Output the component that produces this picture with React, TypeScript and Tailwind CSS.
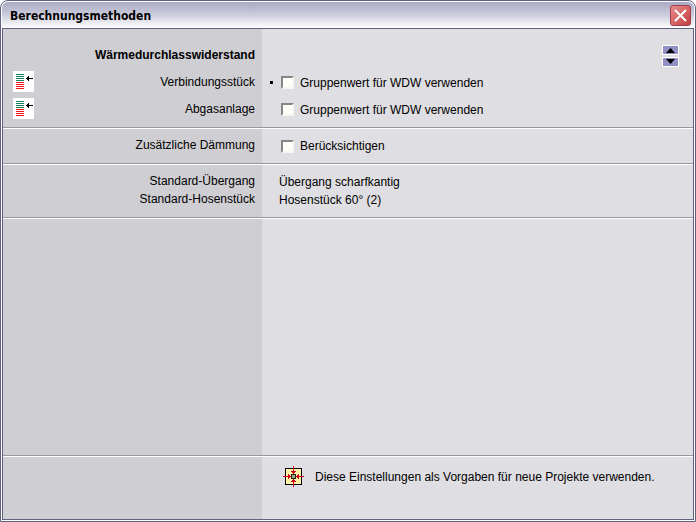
import { useState } from 'react';

interface CheckProps {
  id: string;
  label: string;
}

const Check: React.FC<CheckProps> = ({ id, label }) => {
  const [checked, setChecked] = useState(false);

  return (
    <div className="flex items-center gap-[6px]">
      <input
        id={id}
        type="checkbox"
        checked={checked}
        onChange={(e) => setChecked(e.target.checked)}
        className="h-[13px] w-[13px] appearance-none border-2 border-t-[#86868a] border-l-[#86868a] border-r-[#f6f6f0] border-b-[#f6f6f0] bg-[#fffff8] checked:bg-[#53536f]"
      />
      <label htmlFor={id}>{label}</label>
    </div>
  );
};

const LayersIcon: React.FC = () => (
  <svg width="21" height="21" viewBox="0 0 21 21" shapeRendering="crispEdges" className="block">
    <rect width="21" height="21" fill="#fff" />
    <path d="M3 3h8v1H3zM3 5h8v1H3zM3 7h8v1H3zM3 9h8v1H3z" fill="#16825f" />
    <path d="M3 11h8v1H3zM3 13h8v1H3zM3 15h8v1H3zM3 17h8v1H3z" fill="#f01418" />
    <path d="M13 7h7v1h-7zM14 6h2v3h-2zM15 5h1v5h-1z" fill="#000" />
  </svg>
);

const DefaultsIcon: React.FC = () => (
  <svg width="21" height="21" viewBox="0 0 21 21" shapeRendering="crispEdges" className="block">
    <path d="M2 2h17v17H2z" fill="#000" />
    <path d="M3 3h15v15H3z" fill="#fff3a6" />
    <path
      d="M10 0h1v8h-1zM10 13h1v8h-1zM0 10h8v1H0zM13 10h8v1h-8zM8 5h5v1H8zM9 6h3v1H9zM8 15h5v1H8zM9 14h3v1H9zM5 8h1v5H5zM6 9h1v3H6zM15 8h1v5h-1zM14 9h1v3h-1z"
      fill="#d40020"
    />
    <path d="M8 8h5v5H8z" fill="#222" />
    <path d="M9 9h3v3H9z" fill="#9aae7c" />
  </svg>
);

interface RowProps {
  label?: React.ReactNode;
  children?: React.ReactNode;
  className?: string;
}

// label column on the left, values on the right
const Row: React.FC<RowProps> = ({ label, children, className = '' }) => (
  <div className={`grid grid-cols-[259px_1fr] border-b border-b-white ${className}`}>
    <div className="border-b border-b-[#98989e] bg-[#cfced3] pr-[7px] pl-[10px] text-right">{label}</div>
    <div className="border-b border-b-[#98989e] bg-[#dfdee3] pl-2">{children}</div>
  </div>
);

const App: React.FC = () => {
  return (
    <div className="flex min-h-screen flex-col rounded-t-lg border border-[#606080] bg-white p-px font-['Liberation_Sans',Arial,sans-serif] text-[12px] leading-[18px] text-black">
      <header className="flex h-[26px] items-center justify-between rounded-t-md bg-linear-to-b from-[#a9a9c4] via-[#cdcddd] to-white pr-[3px] pl-2">
        <h1 className="pt-[2px] font-['DejaVu_Sans_Condensed','DejaVu_Sans',sans-serif] text-[12px] font-bold">
          Berechnungsmethoden
        </h1>
        <button
          type="button"
          aria-label="Schließen"
          className="flex h-[21px] w-[21px] items-center justify-center rounded-[3px] border border-[#a03c4c] bg-linear-to-br from-[#e88c8c] to-[#c43c40]"
        >
          <svg width="13" height="13" viewBox="0 0 13 13">
            <path d="M1 1l11 11M12 1L1 12" stroke="#fff" strokeWidth="2" />
          </svg>
        </button>
      </header>

      <main className="flex grow flex-col border border-[#606080]">
        <Row
          label={
            <div className="pt-[17px] pb-[5px]">
              <h2 className="mb-1 text-[12px] font-bold">Wärmedurchlasswiderstand</h2>
              <div className="flex h-[27px] items-center justify-between">
                <LayersIcon />
                <span>Verbindungsstück</span>
              </div>
              <div className="flex h-[27px] items-center justify-between">
                <LayersIcon />
                <span>Abgasanlage</span>
              </div>
            </div>
          }
        >
          <div className="flex justify-between pt-4 pr-[14px]">
            <div className="pt-6">
              <div className="flex h-[27px] items-center gap-2">
                <span className="h-[3px] w-[3px] bg-black" />
                <Check id="verbindung" label="Gruppenwert für WDW verwenden" />
              </div>
              <div className="flex h-[27px] items-center pl-[11px]">
                <Check id="abgas" label="Gruppenwert für WDW verwenden" />
              </div>
            </div>
            <div className="flex flex-col gap-[2px]">
              <button type="button" aria-label="Nach oben" className="border border-white bg-[#9090c4] px-[3px] py-px">
                <svg width="9" height="6" viewBox="0 0 9 6" className="block">
                  <path d="M0 6L4.500 1L9 6z" />
                </svg>
              </button>
              <button type="button" aria-label="Nach unten" className="border border-white bg-[#9090c4] px-[3px] py-px">
                <svg width="9" height="6" viewBox="0 0 9 6" className="block">
                  <path d="M0 0h9L4.500 5z" />
                </svg>
              </button>
            </div>
          </div>
        </Row>

        <Row label={<div className="pt-[7px] pb-[9px]">Zusätzliche Dämmung</div>}>
          <div className="py-2 pl-[11px]">
            <Check id="daemmung" label="Berücksichtigen" />
          </div>
        </Row>

        <Row
          label={
            <div className="pt-[7px] pb-[9px]">
              <p>Standard-Übergang</p>
              <p>Standard-Hosenstück</p>
            </div>
          }
        >
          <div className="py-2 pl-[9px]">
            <p>Übergang scharfkantig</p>
            <p>Hosenstück 60° (2)</p>
          </div>
        </Row>

        <Row className="grow" />

        <div className="grid grid-cols-[259px_1fr]">
          <div className="bg-[#cfced3]" />
          <div className="flex items-center gap-[11px] bg-[#dfdee3] pt-[9px] pb-8 pl-[21px]">
            <DefaultsIcon />
            <span>Diese Einstellungen als Vorgaben für neue Projekte verwenden.</span>
          </div>
        </div>
      </main>
    </div>
  );
};

export default App;
